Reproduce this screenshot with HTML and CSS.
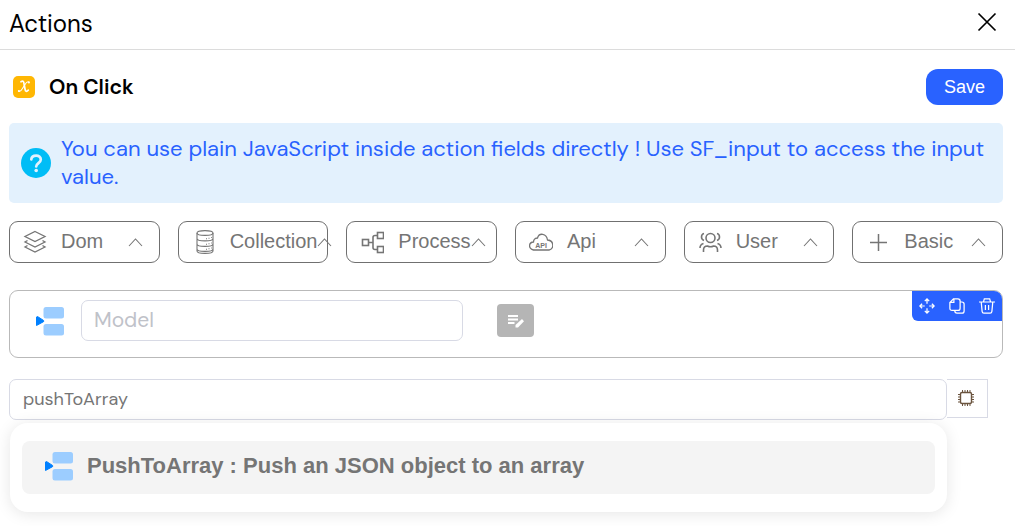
FILE: index.html
```html
<!DOCTYPE html>
<html lang="en">
<head>
  <meta charset="UTF-8">
  <title>Actions</title>
  <link rel="stylesheet" href="styles.css">
</head>
<body>
  <!-- Shared icons -->
  <svg class="icon-defs" aria-hidden="true">
    <symbol id="chevron" viewBox="0 0 15 10">
      <path d="M1 9 7.500 2 14 9" fill="none" stroke="currentColor" stroke-width="1.100"/>
    </symbol>
    <symbol id="push" viewBox="0 0 30 30">
      <rect x="8.500" y="1" width="20.500" height="11.500" rx="2.500" fill="#9ccdff"/>
      <rect x="8.500" y="18" width="20.500" height="11.500" rx="2.500" fill="#9ccdff"/>
      <path d="M1.500 11v8.500l7-3.800q1-.7 0-1.300L2.500 10.500z" fill="#0080ff" stroke="#0080ff" stroke-linejoin="round"/>
    </symbol>
  </svg>

  <!-- Header -->
  <header class="panel-header">
    <h1>Actions</h1>
    <button type="button" class="close-btn" aria-label="Close">
      <svg width="20" height="20" viewBox="0 0 20 20"><path d="M1.500 1.500l17 17M18.500 1.500l-17 17" stroke="#000" stroke-width="1.700"/></svg>
    </button>
  </header>

  <main>
    <div class="event-row">
      <svg width="22" height="22" viewBox="0 0 22 22">
        <rect width="22" height="22" rx="5" fill="#ffb703"/>
        <path d="M8 5.800c2.200-1.300 2.700-.3 3 1.700l1 5.500c.4 2.600 1.600 3 3.300 1.200" fill="none" stroke="#fff" stroke-width="1.700" stroke-linecap="round"/>
        <path d="M16 6c-1.500-.8-2.700.3-4 2.500l-2.500 4c-1.400 2.400-2.500 3.400-4 2.600" fill="none" stroke="#fff" stroke-width="1.100" stroke-linecap="round"/>
        <circle cx="15.900" cy="6.500" r="1" fill="#fff"/><circle cx="5.900" cy="14.900" r="1" fill="#fff"/>
      </svg>
      <h2>On Click</h2>
      <button type="button" class="save-btn">Save</button>
    </div>

    <div class="hint">
      <svg width="30" height="30" viewBox="0 0 30 30">
        <circle cx="15" cy="15" r="15" fill="#00bdf6"/>
        <path d="M10.300 11.300c.5-5 9.500-5 9.500.2 0 3.400-4.600 3.800-4.600 7" fill="none" stroke="#e3f1fd" stroke-width="2.700" stroke-linecap="round"/>
        <circle cx="15.200" cy="22.500" r="1.800" fill="#e3f1fd"/>
      </svg>
      <p>You can use plain JavaScript inside action fields directly ! Use SF_input to access the input value.</p>
    </div>

    <!-- Action groups -->
    <div class="toolbar">
      <button type="button" class="group-btn">
        <svg class="group-icon" viewBox="0 0 24 24">
          <path d="M12 1.500 22 6.500 12 11.500 2 6.500zM4.500 10.500l-2.500 1.500L12 17l10-5-2.500-1.500M4.500 15.500 2 17l10 5 10-5-2.500-1.500"/>
        </svg>
        <span>Dom</span>
        <svg class="chevron"><use href="#chevron"/></svg>
      </button>
      <button type="button" class="group-btn">
        <svg class="group-icon" viewBox="0 0 24 24">
          <g stroke-width="1.100">
            <ellipse cx="13" cy="3" rx="8" ry="2.400"/>
            <path d="M5 3v18c0 3.200 16 3.200 16 0V3M5 8.500c0 3.200 16 3.200 16 0M5 14c0 3.200 16 3.200 16 0M5 19c0 3.200 16 3.200 16 0"/>
            <path d="M14 8.700h1M16.500 8.300h1M19 7.500h.8M14 14.200h1M16.500 13.800h1M19 13h.8M14 19.200h1M16.500 18.800h1M19 18h.8"/>
          </g>
        </svg>
        <span>Collection</span>
        <svg class="chevron"><use href="#chevron"/></svg>
      </button>
      <button type="button" class="group-btn">
        <svg class="group-icon" viewBox="0 0 24 24">
          <g stroke-width="1.600">
            <rect x="2.500" y="9.500" width="6" height="6"/>
            <rect x="17.500" y="2.500" width="6" height="6"/>
            <rect x="17.500" y="16.500" width="6" height="6"/>
            <path d="M8.500 12.500H13M17.500 5.500H15q-2 0-2 2v10q0 2 2 2h2.500"/>
          </g>
        </svg>
        <span>Process</span>
        <svg class="chevron"><use href="#chevron"/></svg>
      </button>
      <button type="button" class="group-btn">
        <svg class="group-icon" viewBox="0 0 24 24">
          <path d="M4.500 20C-1 18.500-.5 12.500 4.500 12c0-3 2-4 4-4C10 2.500 17.500 3 18.500 10c6.500.5 7 8.500 1.500 10z"/>
          <text x="12" y="17.500" class="api-text">API</text>
        </svg>
        <span>Api</span>
        <svg class="chevron"><use href="#chevron"/></svg>
      </button>
      <button type="button" class="group-btn">
        <svg class="group-icon" viewBox="0 0 24 24">
          <g stroke-width="1.600">
            <circle cx="12.500" cy="8" r="4.500"/>
            <path d="M5.500 22v-2q0-4 4-4 3 1.500 6 0 4 0 4 4v2"/>
            <path d="M6 3.500Q3.500 4 3.500 7q0 2.500 2.500 3.500M19 3.500q2.500.5 2.500 3.500 0 2.500-2.500 3.500M2 18q0-3.500 3.500-4.500M23 18q0-3.500-3.500-4.500"/>
          </g>
        </svg>
        <span>User</span>
        <svg class="chevron"><use href="#chevron"/></svg>
      </button>
      <button type="button" class="group-btn">
        <svg class="group-icon" viewBox="0 0 24 24"><path d="M4 12.500h17M12.500 4v17" stroke-width="1.500"/></svg>
        <span>Basic</span>
        <svg class="chevron"><use href="#chevron"/></svg>
      </button>
    </div>

    <!-- Action card -->
    <section class="action-card">
      <svg class="push-icon"><use href="#push"/></svg>
      <input type="text" class="model-input" placeholder="Model" aria-label="Model">
      <button type="button" class="edit-btn" aria-label="Edit">
        <svg width="18" height="16" viewBox="0 0 18 16">
          <path d="M2 3h10M2 6.500h10M2 10h6.500" stroke="#fff" stroke-width="2"/>
          <path d="M9.500 14.500V12L16 6l2 2.300-6 6.200z" fill="#fff"/>
        </svg>
      </button>
      <div class="card-tools">
        <button type="button" aria-label="Move">
          <svg viewBox="0 0 18 18"><path d="M9 1v5.500M6.500 3.500 9 1l2.500 2.500M9 17v-5.500M6.500 14.500 9 17l2.500-2.500M1 9h5.500M3.500 6.500 1 9l2.500 2.500M17 9h-5.500M14.500 6.500 17 9l-2.500 2.500"/></svg>
        </button>
        <button type="button" aria-label="Copy">
          <svg viewBox="0 0 18 18"><path d="M5 1h5q2.500 0 2.500 2.500v8q0 2.500-2.500 2.500H3.500Q1 14 1 11.500V5zM5.500 1v4H1M12.500 4.500h2Q17 4.500 17 7v7.500q0 2.500-2.500 2.500H9q-2.500 0-2.500-3"/></svg>
        </button>
        <button type="button" aria-label="Delete">
          <svg viewBox="0 0 18 18"><path d="M0 4.500h18M5 4.500l1-3.500h6l1 3.500M2.500 4.500l1 10.500q.2 2 2 2h7q1.800 0 2-2l1-10.500M7.200 8v5.500M10.800 8v5.500"/></svg>
        </button>
      </div>
    </section>

    <!-- Search -->
    <div class="search-row">
      <div class="search-field">
        <input type="text" class="search-input" value="pushToArray" aria-label="Search actions">
        <ul class="results">
          <li>
            <button type="button" class="result">
              <svg class="push-icon"><use href="#push"/></svg>
              <span>PushToArray : Push an JSON object to an array</span>
            </button>
          </li>
        </ul>
      </div>
      <button type="button" class="chip-btn" aria-label="Variables">
        <svg width="18" height="18" viewBox="0 0 18 18" fill="none" stroke="#6b543f">
          <rect x="3.500" y="3.500" width="11" height="11" rx="1.500" stroke-width="1.400"/>
          <path d="M5.500 1v2.500M8 1v2.500M10.500 1v2.500M13 1v2.500M5.500 14.500V17M8 14.500V17M10.500 14.500V17M13 14.500V17M1 5.500h2.500M1 8h2.500M1 10.500h2.500M1 13h2.500M14.500 5.500H17M14.500 8H17M14.500 10.500H17M14.500 13H17"/>
        </svg>
      </button>
    </div>
  </main>
</body>
</html>
```
FILE: styles.css
```css
/* General Styles */
* {
  box-sizing: border-box;
}

body {
  font-family: "DM Sans", Inter, sans-serif;
  font-optical-sizing: none;
  margin: 0;
  min-height: 100vh;
  background-color: #fff;
  color: #000;
}

h1, h2, p, ul {
  margin: 0;
  padding: 0;
}

button {
  font-family: inherit;
  padding: 0;
  border: none;
  background: none;
  cursor: pointer;
}

svg {
  flex: none;
}

.icon-defs {
  display: none;
}

/* Header */
.panel-header {
  display: flex;
  align-items: center;
  justify-content: space-between;
  padding: 8px 18px 10px 9px;
  border-bottom: 1px solid #dcdcdc;
}

.panel-header h1 {
  font-size: 24px;
  line-height: 31px;
  font-weight: 400;
}

.close-btn {
  margin-bottom: 3px;
}

.close-btn svg {
  display: block;
}

main {
  padding: 19px 12px 12px 9px;
}

.event-row {
  display: flex;
  align-items: center;
  padding-left: 4px;
}

.event-row h2 {
  margin-left: 14px;
  font-size: 21px;
  font-weight: 600;
}

.save-btn {
  margin-left: auto;
  padding: 0 18px;
  height: 36px;
  border-radius: 12px;
  background-color: #2962ff;
  color: #fff;
  font-family: "Liberation Sans", Arial, sans-serif;
  font-size: 18px;
}

/* Hint */
.hint {
  display: flex;
  align-items: center;
  gap: 10px;
  margin-top: 18px;
  padding: 12px;
  border-radius: 5px;
  background-color: #e3f1fd;
  color: #2962ff;
  font-size: 22px;
  line-height: 28px;
}

/* Action groups */
.toolbar {
  display: grid;
  grid-template-columns: repeat(6, minmax(0, 1fr));
  gap: 18px;
  margin-top: 18px;
}

.group-btn {
  display: flex;
  align-items: center;
  height: 42px;
  padding-left: 13px;
  border: 1px solid #707070;
  border-radius: 9px;
  color: #757575;
  font-family: "Liberation Sans", Arial, sans-serif;
  font-size: 20px;
}

.group-btn span {
  flex: none;
  min-width: 67px;
  margin-left: 14px;
  padding-bottom: 2px;
  text-align: left;
}

.group-icon {
  width: 24px;
  height: 24px;
  fill: none;
  stroke: #757575;
  stroke-width: 1.3;
}

.api-text {
  font: bold 7px "Liberation Sans", Arial, sans-serif;
  text-anchor: middle;
  fill: #757575;
  stroke: none;
}

.chevron {
  width: 15px;
  height: 10px;
}

/* Action card */
.action-card {
  position: relative;
  display: flex;
  align-items: center;
  margin-top: 27px;
  padding: 9px 13px 16px 25px;
  border: 1px solid #b9b9b9;
  border-radius: 9px;
}

.push-icon {
  width: 30px;
  height: 30px;
}

.model-input {
  width: 40%;
  height: 41px;
  margin-left: 16px;
  padding: 0 12px 2px;
  border: 1px solid #d8dae5;
  border-radius: 7px;
  font: inherit;
  font-size: 21px;
}

.model-input::placeholder {
  color: #bfc2c9;
}

.edit-btn {
  display: flex;
  align-items: center;
  justify-content: center;
  width: 37px;
  height: 33px;
  margin-left: 34px;
  border-radius: 4px;
  background-color: #b5b5b5;
}

.card-tools {
  position: absolute;
  top: 0;
  right: 0;
  display: flex;
  border-radius: 0 8px 0 6px;
  background-color: #2962ff;
}

.card-tools button {
  display: flex;
  align-items: center;
  justify-content: center;
  width: 30px;
  height: 30px;
}

.card-tools svg {
  width: 16px;
  height: 16px;
  fill: none;
  stroke: #fff;
  stroke-width: 1.4;
}

/* Search */
.search-row {
  display: flex;
  align-items: flex-start;
  margin-top: 21px;
  padding-right: 15px;
}

.search-field {
  flex: 1;
}

.search-input {
  display: block;
  width: 100%;
  height: 41px;
  padding: 0 13px 2px;
  border: 1px solid #d8dae5;
  border-radius: 7px;
  color: #757575;
  font: inherit;
  font-size: 18px;
}

.chip-btn {
  display: flex;
  align-items: center;
  justify-content: center;
  width: 41px;
  height: 39px;
  padding: 0 2px 1px 0;
  border: 1px solid #d8dae5;
  border-left: none;
}

.results {
  margin: 3px 0 0 1px;
  padding: 18px 12px;
  border-radius: 18px;
  background-color: #fff;
  box-shadow: 0 2px 16px rgba(0, 0, 0, 0.1);
  list-style: none;
}

.result {
  display: flex;
  align-items: center;
  gap: 13px;
  width: 100%;
  height: 53px;
  padding: 0 22px 4px;
  border-radius: 8px;
  background-color: #f4f4f4;
  color: #757575;
  font-family: "Liberation Sans", Arial, sans-serif;
  font-size: 22px;
  font-weight: 700;
}
```
